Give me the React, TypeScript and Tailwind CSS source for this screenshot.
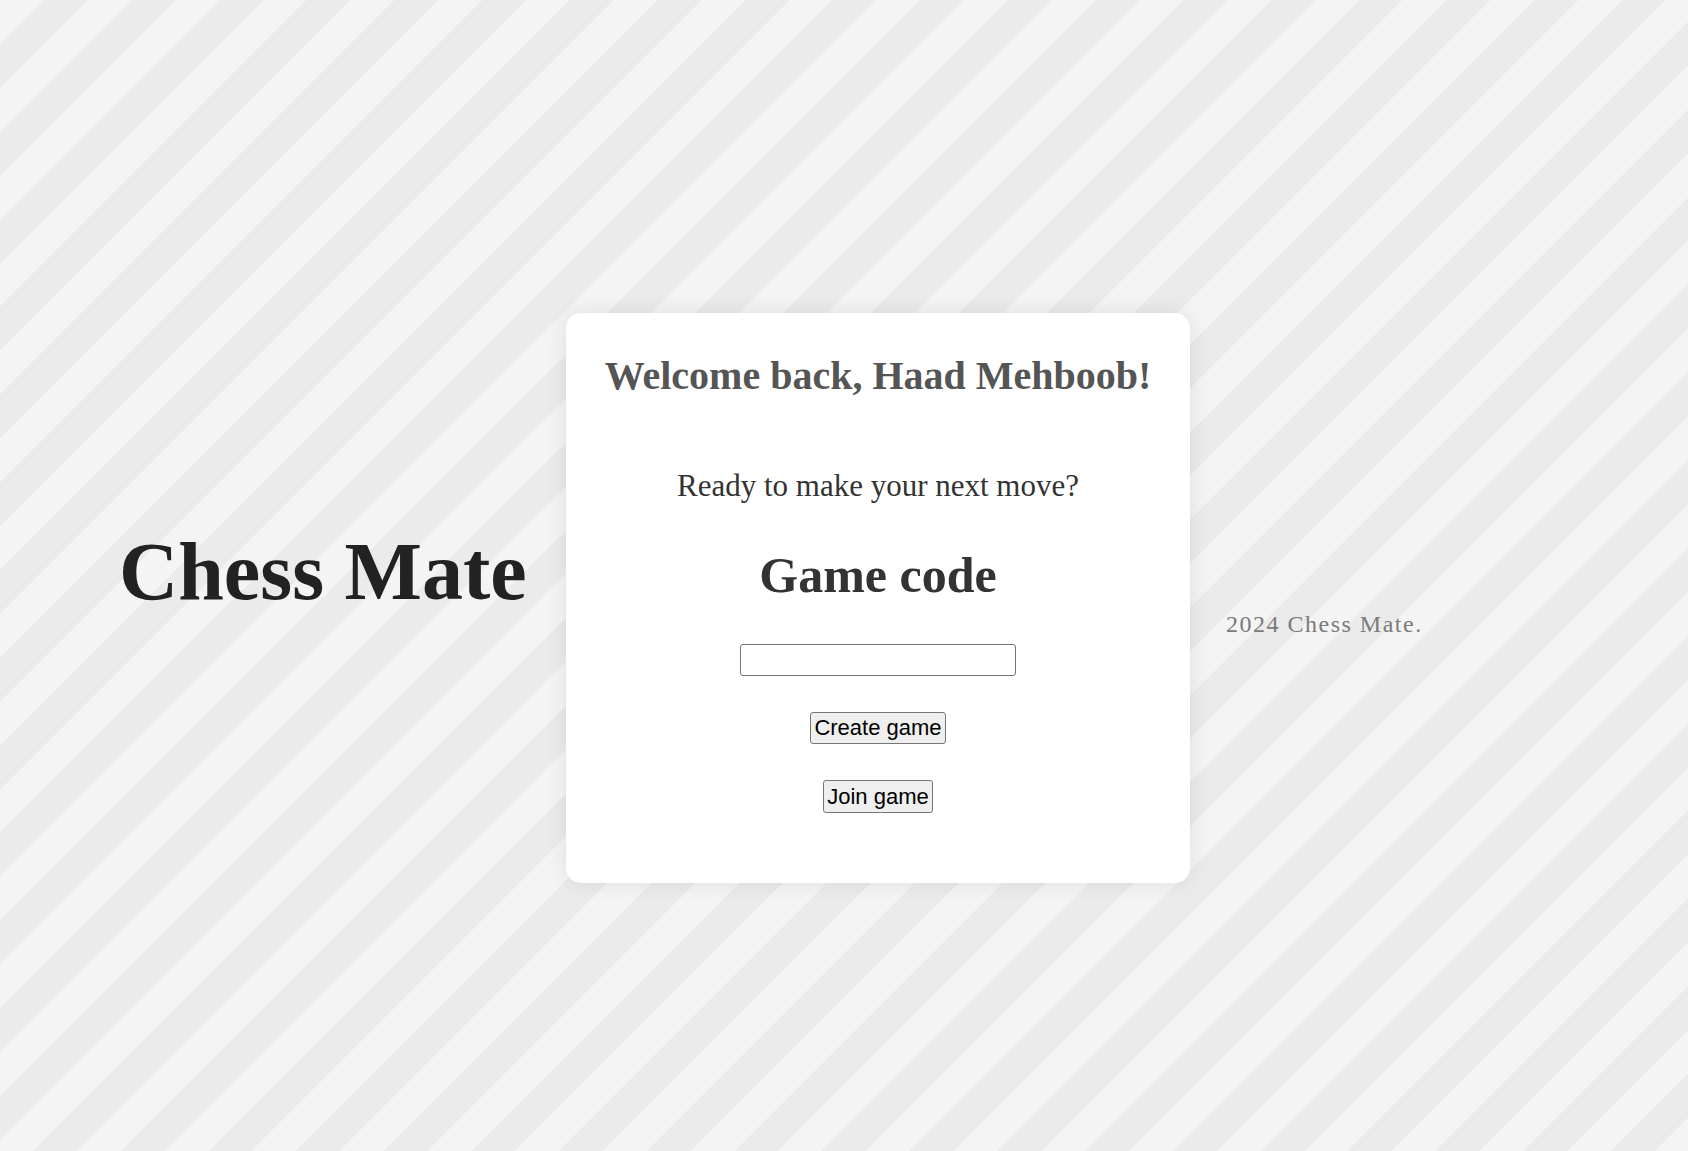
const serif = { fontFamily: '"Liberation Serif", "DejaVu Serif", serif' };

const App = () => {
  return (
    <div className="min-h-screen w-full bg-[repeating-linear-gradient(135deg,#f4f4f4_0px,#f4f4f4_31px,#ebebeb_31px,#ebebeb_62px)] bg-[#f4f4f4]">
      <div className="h-screen flex items-center pl-[119px] pt-[45px]" style={serif}>
        {/* Title */}
        <h1 className="w-[411px] shrink-0 mb-[52px] text-[82px] leading-none font-bold text-[#222] whitespace-nowrap">
          Chess Mate
        </h1>

        {/* Card */}
        <div className="ml-[36px] w-[624px] h-[570px] shrink-0 bg-white rounded-[15px] shadow-[0_0_22px_rgba(0,0,0,0.09)] flex flex-col items-center pt-[43px]">
          <h2 className="text-[40px] leading-none font-bold text-[#555] whitespace-nowrap">
            Welcome back, Haad Mehboob!
          </h2>
          <p className="mt-[74px] text-[31px] leading-none text-[#333] whitespace-nowrap">
            Ready to make your next move?
          </p>
          <h3 className="mt-[49px] text-[50px] leading-none font-bold text-[#333] whitespace-nowrap">
            Game code
          </h3>
          <input
            type="text"
            className="mt-[44px] w-[276px] h-[32px] bg-white border border-[#767676] rounded-[3px] px-1 text-[20px] outline-none"
          />
          <button
            className="mt-[36px] h-[32px] px-[3px] bg-[#efefef] border border-[#767676] rounded-[3px] text-[22px] leading-none text-black"
            style={{ fontFamily: '"Liberation Sans", Arial, sans-serif' }}
          >
            Create game
          </button>
          <button
            className="mt-[36px] h-[33px] px-[3px] bg-[#efefef] border border-[#767676] rounded-[3px] text-[22px] leading-none text-black"
            style={{ fontFamily: '"Liberation Sans", Arial, sans-serif' }}
          >
            Join game
          </button>
        </div>

        {/* Footer */}
        <p className="ml-[36px] mt-[52px] text-[24px] leading-none tracking-[1.5px] text-[#7a7a7a] whitespace-nowrap">
          2024 Chess Mate.
        </p>
      </div>
    </div>
  );
};

export default App;
